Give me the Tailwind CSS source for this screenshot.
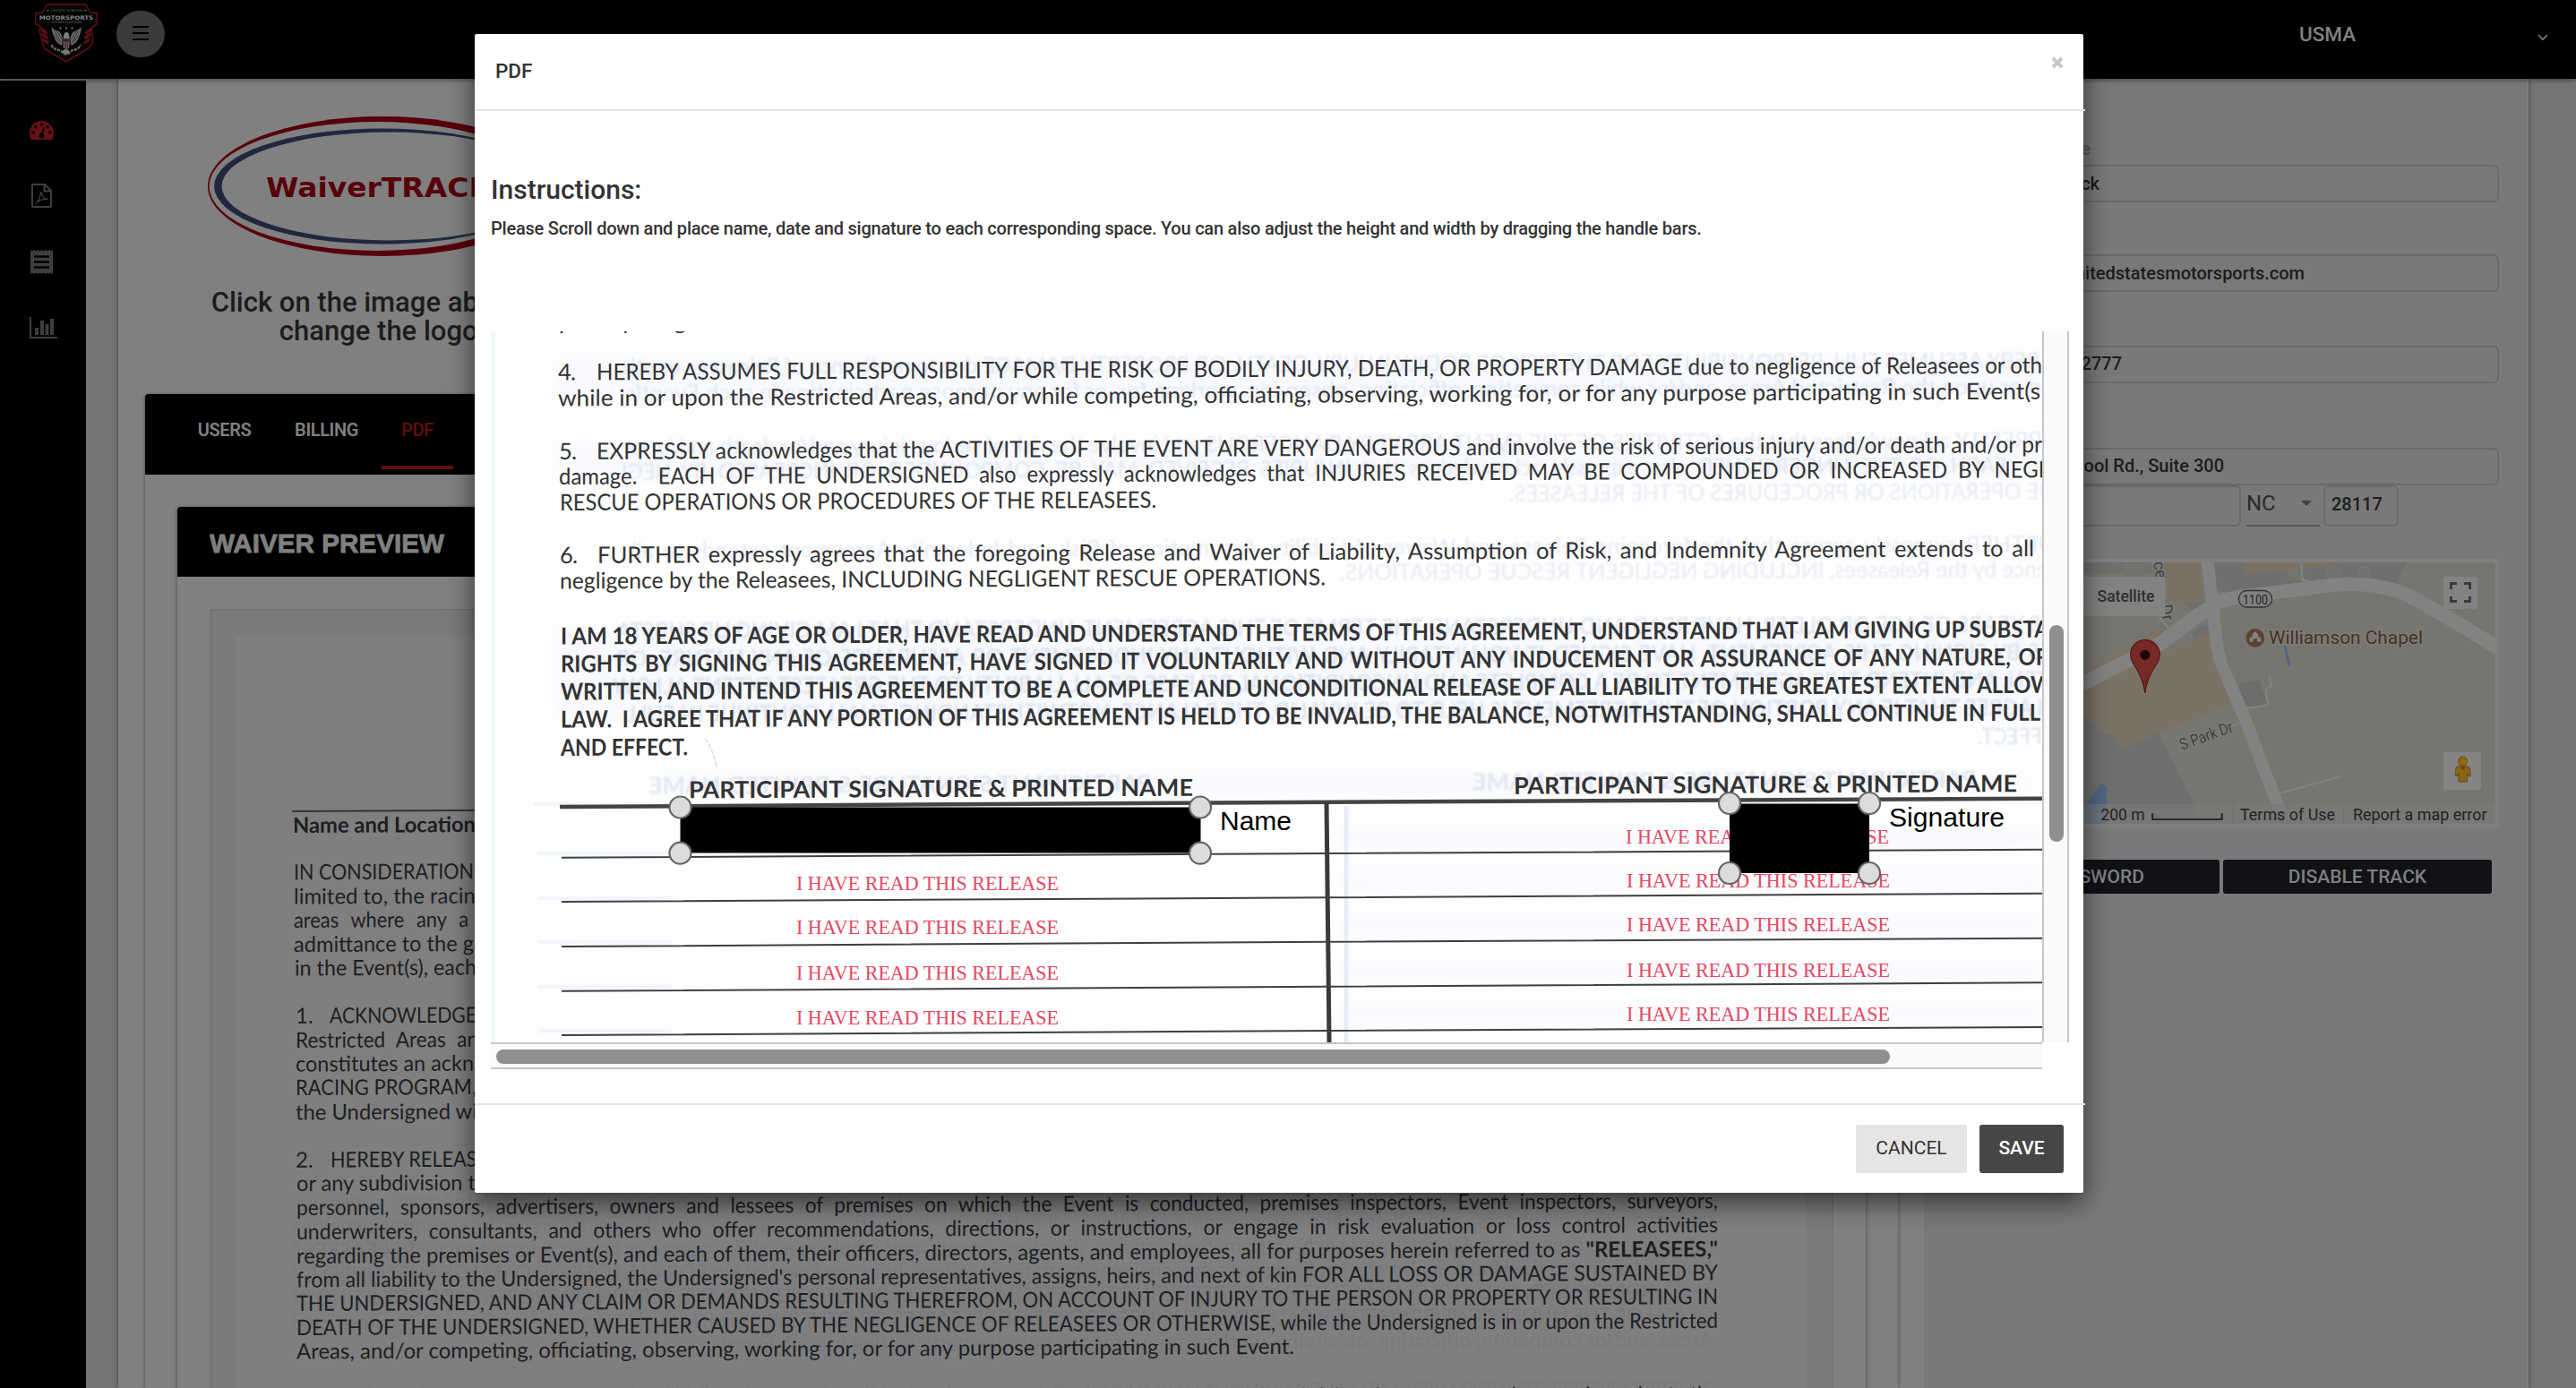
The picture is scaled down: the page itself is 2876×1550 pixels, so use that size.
<!DOCTYPE html>
<html lang="en">
<head>
<meta charset="utf-8">
<title>USMA - PDF</title>
<script src="https://cdn.jsdelivr.net/npm/@tailwindcss/browser@4"></script>
</head>
<body class="bg-[#747474]">
<div class="relative w-[2876px] h-[1550px] overflow-hidden bg-[#747474] font-['Roboto',sans-serif] text-[#1c1c1c]">

  <!-- top bar -->
  <header class="relative z-10 flex h-[88px] items-start bg-black shadow-[0_1px_6px_rgba(0,0,0,0.5)]">
    <svg class="ml-[38px] mt-[3px] h-[68px] w-[72px]" viewBox="110 7 210 152" preserveAspectRatio="none">
      <path d="M152 11H278L293 32L315 33V60L303 66L298 76L302 108L287 121L214 154L143 121L128 80L130 66L115 60V33L137 32Z" fill="#050505" stroke="#5e0f14" stroke-width="4"/>
      <path d="M129 66l24 13v9l-20-10zM133 80l22 11v9l-19-10zM137 94l21 10v8l-18-9zM301 66l-24 13v9l20-10zM297 80l-22 11v9l19-10zM293 94l-21 10v8l18-9z" fill="#5e0f14"/>
      <text x="148" y="29" font-family="Liberation Sans" font-size="8" fill="#555" textLength="134" lengthAdjust="spacingAndGlyphs">★ UNITED STATES ★</text>
      <text x="127" y="49" font-family="DejaVu Sans" font-weight="bold" font-size="14" fill="#858585" textLength="176" lengthAdjust="spacingAndGlyphs">MOTORSPORTS</text>
      <text x="167" y="59" font-family="DejaVu Sans" font-size="8" fill="#666" textLength="98" lengthAdjust="spacingAndGlyphs">ASSOCIATION</text>
      <path d="M167 68Q174 76 190 78Q200 84 203 98L200 114Q182 108 174 90Q168 80 167 68zM264 68Q256 76 242 78Q230 84 228 98L231 114Q250 108 258 90Q263 80 264 68z" fill="#6b6b6b"/>
      <path d="M176 78l20 26M182 76l18 22M174 88l22 20M255 78l-20 26M249 76l-18 22M257 88l-22 20" stroke="#0a0a0a" stroke-width="1.5"/>
      <path d="M207 88q2-8 10-7q8 1 8 12l3 6h-24z" fill="#7d7d7d"/>
      <path d="M202 97h26v14q-2 10-13 14q-11-4-13-14z" fill="#50282c"/><path d="M202 97h26v6h-26z" fill="#1e2a45"/>
      <path d="M208 104v17M215 104v20M222 104v17" stroke="#777" stroke-width="2"/>
      <path d="M166 112q8 12 24 13q10 0 12 6q12 8 26 0q4-6 12-6q16-2 22-13" fill="none" stroke="#686868" stroke-width="6" stroke-dasharray="9 3"/>
      <path d="M200 131q15 10 28 0l-8-7h-12z" fill="#777"/>
      <text x="191" y="75" font-family="DejaVu Sans" font-size="11" fill="#777" textLength="48">★★★</text>
    </svg>
    <button class="ml-[20px] mt-[12px] flex h-[52px] w-[54px] flex-col items-center justify-center gap-[5px] rounded-full bg-[#3b3b3b] pb-[2px]">
      <span class="h-[2px] w-[18px] bg-black"></span><span class="h-[2px] w-[18px] bg-black"></span><span class="h-[2px] w-[18px] bg-black"></span>
    </button>
    <div class="ml-auto mr-[31px] flex h-[77px] w-[278px] items-center justify-between">
      <span class="text-[22.5px] font-medium text-[#808080]">USMA</span>
      <svg class="mt-[7px] h-[8px] w-[12px]" viewBox="0 0 12 8"><path d="M1 1l5 5 5-5" fill="none" stroke="#808080" stroke-width="1.6"/></svg>
    </div>
  </header>

  <div class="flex h-[1462px]">
    <!-- side navigation -->
    <nav class="mt-[2px] flex w-[96px] shrink-0 flex-col bg-black">
      <svg class="ml-[33px] mt-[45px] h-[21px] w-[27px]" viewBox="0 0 27 21"><path d="M2 21Q0 18 0 13.500A13.500 13.500 0 0 1 27 13.500Q27 18 25 21Z" fill="#6a1015"/><g fill="#000"><circle cx="4" cy="13" r="1.900"/><circle cx="6.800" cy="6.800" r="1.900"/><circle cx="13.500" cy="4" r="1.900"/><circle cx="20.200" cy="6.800" r="1.900"/><circle cx="23" cy="13" r="1.900"/><circle cx="13.500" cy="16.500" r="2.900"/></g><path d="M13.500 16L16 7.500" stroke="#000" stroke-width="1.800"/></svg>
      <svg class="ml-[35px] mt-[49px] h-[27px] w-[23px]" viewBox="0 0 23 27" fill="none" stroke="#404040" stroke-width="2"><path d="M1 2Q1 1 2 1H15L22 8V25Q22 26 21 26H2Q1 26 1 25ZM14.500 1V8.500H22"/><path d="M4.500 22.500Q9 20 10.800 9Q12 17 18.500 17.500Q11 16.500 5 22" stroke-width="1.400"/></svg>
      <svg class="ml-[34px] mt-[47px] h-[27px] w-[25px]" viewBox="0 0 25 27"><path d="M0 0l2 1.500L4.200 0l2 1.500L8.400 0l2 1.500L12.500 0l2 1.500L16.700 0l2 1.500L20.900 0l2 1.500L25 0V27l-2.100-1.500L20.900 27l-2.200-1.500L16.700 27l-2.200-1.500L12.500 27l-2.100-1.500L8.400 27l-2.200-1.500L4.200 27l-2.200-1.500L0 27Z" fill="#3e3e3e"/><path d="M4 7.500H21M4 13.500H21M4 19.500H21" stroke="#000" stroke-width="2.300"/></svg>
      <svg class="ml-[33px] mt-[48px] h-[24px] w-[31px]" viewBox="0 0 31 24" fill="#3e3e3e"><path d="M0 0H2V22H31V24H0ZM6 12h4v8H6zM12 4h4v16h-4zM17.500 8h4v12h-4zM23 2h4v18h-4z"/></svg>
    </nav>

    <main class="ml-[36px] flex w-[2691px] shrink-0 bg-[#808080] shadow-[0_0_5px_rgba(0,0,0,0.45)]">
      <!-- left column: logo, tabs, waiver preview -->
      <section class="w-[2016px] shrink-0 pl-[30px]">
        <div class="flex h-[352px] w-[530px] flex-col items-center pt-[42px]">
          <svg class="h-[156px] w-[390px]" viewBox="232 130 390 156">
            <ellipse cx="427" cy="208" rx="195" ry="78" fill="#57000b"/><ellipse cx="421" cy="208" rx="187.500" ry="72" fill="#808080"/>
            <ellipse cx="427" cy="208" rx="188" ry="64.600" fill="#20273f"/><ellipse cx="434" cy="208" rx="186.500" ry="60.500" fill="#808080"/>
            <text x="297" y="220" font-family="DejaVu Sans" font-weight="bold" font-size="31" fill="#57000b" textLength="252" lengthAdjust="spacingAndGlyphs">WaiverTRACK</text>
          </svg>
          <p class="mt-[36px] whitespace-nowrap text-center text-[31px] font-medium leading-[32px] text-[#1c1c1c]">Click on the image above to<br>change the logo.</p>
        </div>
        <div class="h-[1110px] w-[1957px] rounded-t-[4px] bg-[#808080] shadow-[0_1px_4px_rgba(0,0,0,0.45)]">
          <div class="flex h-[90px] items-start rounded-t-[4px] bg-black pl-[36px] text-[20px] font-semibold tracking-[-0.4px] text-[#808080]">
            <span class="flex h-[84px] w-[105px] items-center justify-center pb-[5px]">USERS</span>
            <span class="flex h-[84px] w-[123px] items-center justify-center pb-[5px]">BILLING</span>
            <span class="flex h-[84px] w-[80px] items-center justify-center border-b-4 border-[#620d12] pb-px font-medium text-[#620d12]">PDF</span>
          </div>
          <div class="px-[36px] pt-[36px]">
            <div class="h-[990px] rounded-t-[4px] bg-[#808080] shadow-[0_1px_4px_rgba(0,0,0,0.45)]">
              <div class="flex h-[78px] items-center rounded-t-[4px] bg-black pl-[36px]">
                <svg class="h-[40px] w-[270px]" viewBox="0 0 270 40"><text x="0" y="31.500" font-family="Liberation Sans" font-weight="bold" font-size="30" fill="#808080" stroke="#808080" stroke-width="0.800" textLength="262" lengthAdjust="spacingAndGlyphs">WAIVER PREVIEW</text></svg>
              </div>
              <div class="px-[36px] pt-[36px]">
                <div class="h-[900px] rounded-[4px] border-2 border-[#737373] bg-[#7a7a7a] pl-[28px] pt-[28px]">
                  <svg class="h-[842px] w-[1752px] bg-[#7f7f80]" viewBox="264 710 1752 842" font-family="Lato" font-size="24" fill="#1e1e1e">
                    <g transform="matrix(1,-0.005,0,1,0,1.65)">
                      <use href="#preview-copy" transform="translate(2244,-6) scale(-1,1)" fill="#303c58" opacity="0.070"/>
                      <path d="M326 906H1918" stroke="#333" stroke-width="2"/>
                      <g id="preview-copy">
                        <text x="327" y="930" font-weight="bold" textLength="204" lengthAdjust="spacingAndGlyphs">Name and Location</text>
                        <text x="328" y="982.400" textLength="201" lengthAdjust="spacingAndGlyphs">IN CONSIDERATION</text>
                        <text x="328" y="1009.600" textLength="203" lengthAdjust="spacingAndGlyphs">limited to, the racin</text>
                        <text x="328" y="1036" textLength="195" lengthAdjust="spacingAndGlyphs" word-spacing="9">areas where any a</text>
                        <text x="328" y="1063" textLength="201" lengthAdjust="spacingAndGlyphs">admittance to the g</text>
                        <text x="329" y="1089.500" textLength="203" lengthAdjust="spacingAndGlyphs">in the Event(s), each</text>
                        <text x="330" y="1142.800">1.</text>
                        <text x="368" y="1142.800" textLength="164" lengthAdjust="spacingAndGlyphs">ACKNOWLEDGE</text>
                        <text x="330" y="1170" textLength="204" lengthAdjust="spacingAndGlyphs" word-spacing="7">Restricted Areas an</text>
                        <text x="330" y="1196.600" textLength="199" lengthAdjust="spacingAndGlyphs">constitutes an ackn</text>
                        <text x="330" y="1223" textLength="202" lengthAdjust="spacingAndGlyphs">RACING PROGRAM,</text>
                        <text x="330" y="1250.500" textLength="203" lengthAdjust="spacingAndGlyphs">the Undersigned wi</text>
                        <text x="330" y="1303.700">2.</text>
                        <text x="369" y="1303.700" textLength="188" lengthAdjust="spacingAndGlyphs">HEREBY RELEASES</text>
                        <text x="331" y="1330" textLength="200" lengthAdjust="spacingAndGlyphs">or any subdivision t</text>
                        <text x="331" y="1357" textLength="1587" lengthAdjust="spacingAndGlyphs" word-spacing="7">personnel, sponsors, advertisers, owners and lessees of premises on which the Event is conducted, premises inspectors, Event inspectors, surveyors,</text>
                        <text x="331" y="1384" textLength="1587" lengthAdjust="spacingAndGlyphs" word-spacing="7">underwriters, consultants, and others who offer recommendations, directions, or instructions, or engage in risk evaluation or loss control activities</text>
                        <text x="331" y="1411" textLength="1587" lengthAdjust="spacingAndGlyphs">regarding the premises or Event(s), and each of them, their officers, directors, agents, and employees, all for purposes herein referred to as <tspan font-weight="bold">"RELEASEES,"</tspan></text>
                        <text x="331" y="1437.500" textLength="1587" lengthAdjust="spacingAndGlyphs">from all liability to the Undersigned, the Undersigned's personal representatives, assigns, heirs, and next of kin FOR ALL LOSS OR DAMAGE SUSTAINED BY</text>
                        <text x="331" y="1464" textLength="1587" lengthAdjust="spacingAndGlyphs">THE UNDERSIGNED, AND ANY CLAIM OR DEMANDS RESULTING THEREFROM, ON ACCOUNT OF INJURY TO THE PERSON OR PROPERTY OR RESULTING IN</text>
                        <text x="331" y="1491" textLength="1587" lengthAdjust="spacingAndGlyphs">DEATH OF THE UNDERSIGNED, WHETHER CAUSED BY THE NEGLIGENCE OF RELEASEES OR OTHERWISE, while the Undersigned is in or upon the Restricted</text>
                        <text x="331" y="1517.500" textLength="1114" lengthAdjust="spacingAndGlyphs">Areas, and/or competing, officiating, observing, working for, or for any purpose participating in such Event.</text>
                        <text x="331" y="1573" textLength="1587" lengthAdjust="spacingAndGlyphs">3. HEREBY AGREES TO INDEMNIFY AND SAVE AND HOLD HARMLESS the Releasees and each of them from any loss, liability, damage, or cost they may incur due to the</text>
                      </g>
                    </g>
                  </svg>
                </div>
              </div>
            </div>
          </div>
        </div>
      </section>

      <!-- right column: track details -->
      <section class="w-[673px] shrink-0 bg-[#797979] pl-[30px] text-[20px] font-medium leading-[24px]">
        <div class="flex h-[96px] w-[156px] items-end justify-end pb-[6px] text-[#555]">Track Name</div>
        <div class="flex h-[42px] w-[612px] items-center rounded-[6px] border-2 border-[#6a6a6a]"><span class="flex w-[164px] justify-end">Track</span></div>
        <div class="mt-[58px] flex h-[42px] w-[612px] items-center rounded-[6px] border-2 border-[#6a6a6a]"><span class="flex w-[393px] justify-end">info@unitedstatesmotorsports.com</span></div>
        <div class="mt-[60px] flex h-[42px] w-[612px] items-center rounded-[6px] border-2 border-[#6a6a6a]"><span class="flex w-[189px] justify-end pb-[3px]">704-555-2777</span></div>
        <div class="mt-[72px] flex h-[42px] w-[612px] items-center rounded-[6px] border-2 border-[#6a6a6a]"><span class="flex w-[303px] justify-end whitespace-nowrap pb-[3px]">School Rd., Suite 300</span></div>
        <div class="flex h-[46px]">
          <div class="w-[324px] rounded-[6px] border-2 border-[#6a6a6a]"></div>
          <div class="ml-[6px] flex w-[82px] items-center justify-between border-b-2 border-[#565656] pb-[5px] pr-[9px] text-[24px] font-normal text-[#2a2a2a]">NC<svg class="h-[6px] w-[12px]" viewBox="0 0 12 6"><path d="M0 0H12L6 6Z" fill="#404040"/></svg></div>
          <div class="ml-[4px] flex w-[84px] items-center rounded-[6px] border-2 border-[#6a6a6a] pb-[4px] pl-[7px]">28117</div>
        </div>
        <div class="mt-[36px] h-[300px] w-[612px] border-4 border-[#808080] bg-[#76756f]">
          <svg class="ml-auto block h-[292px] w-[460px]" viewBox="2326 628 460 292" font-family="Roboto" font-weight="400">
            <g transform="translate(2300 590) scale(0.36735 0.33333)">
              <path d="M60 100H1330V1000H60Z" fill="#76756f"/>
              <path d="M60 100H280V150H60ZM470 110H1055L1020 190L840 170L500 215L475 200Z" fill="#6f6f6f"/>
              <path d="M190 120h60v40h-60zM690 125h50v50h-50zM810 125h45v45h-45zM905 125h40v50h-40zM1285 110L1330 160V110Z" fill="#74746f"/>
              <path d="M280 100H430L440 250L330 260ZM545 112H830L840 125L700 142L570 152Z" fill="#7b7266"/>
              <path d="M385 250L440 245V270L410 285ZM400 350L425 330L450 325L455 345L425 360L432 415H422Z" fill="#6f6f6f"/>
              <path d="M60 480L360 300L370 320L320 420L450 350L520 590L300 685L185 740L160 690L130 690L60 610Z" fill="#7b7266"/>
              <path d="M60 610L130 690L160 690L185 740L300 685L410 930V1000H60Z" fill="#6f6f6f"/>
              <path d="M78 925L125 855L140 865V990H78Z" fill="#4f6583"/>
              <path d="M540 523L605 508L630 590L565 600Z" fill="#6c6c6c"/>
              <g fill="none" stroke="#828282" stroke-linejoin="round">
                <path d="M60 525L300 390L420 290L480 248Q520 230 600 222L830 190Q940 178 1040 215Q1180 295 1335 405" stroke-width="46"/>
                <path d="M447 100L470 330Q480 440 500 480L555 620L670 950" stroke-width="38"/>
                <path d="M732 100L737 175L755 175M565 603L632 592L625 538L642 530L637 492M555 650L520 662M665 888L858 830M300 300L340 345" stroke-width="6"/>
              </g>
              <path d="M683 392L697 460" stroke="#4f6583" stroke-width="7"/>
              <path d="M60 924H1324V990H60Z" fill="#7a7a7a" fill-opacity="0.650"/>
              <path d="M281 955V975H492V955" fill="none" stroke="#2a2a2a" stroke-width="6"/>
              <path d="M526 924V990M862 924V990" stroke="#707070" stroke-width="3"/>
              <path d="M258 552Q252 500 222 452Q214 440 214 424A44 50 0 0 1 303 424Q303 440 295 452Q264 500 258 552Z" fill="#762926" stroke="#521313" stroke-width="3"/>
              <ellipse cx="258" cy="424" rx="15" ry="17" fill="#240606"/>
              <ellipse cx="593" cy="367" rx="28" ry="31" fill="#5a4334"/>
              <path d="M576 380V365h8v-10l9-10l9 10v10h8v15h-11v-10h-12v10z" fill="#828282"/>
            </g>
            <g fill="#3f3f3f" font-size="18" stroke="#7c7c7c" stroke-width="3" paint-order="stroke">
              <text transform="translate(2404 628) rotate(80)">ce</text>
              <text transform="translate(2412 676) rotate(80)">Dr</text>
              <text transform="translate(2436 838) rotate(-20)" textLength="62" lengthAdjust="spacingAndGlyphs">S Park Dr</text>
            </g>
            <rect x="2310" y="644" width="107.500" height="44" rx="2" fill="#828282"/>
            <text x="2341.500" y="671.700" font-size="18" fill="#2f2f2f" font-weight="500" textLength="64" lengthAdjust="spacingAndGlyphs">Satellite</text>
            <rect x="2499.500" y="659.500" width="37" height="18.500" rx="9" fill="#808080" stroke="#333" stroke-width="1.300"/>
            <text x="2504" y="674.500" font-size="15" fill="#222" textLength="28" lengthAdjust="spacingAndGlyphs">1100</text>
            <text x="2533" y="719.300" font-size="21" fill="#463022" stroke="#7c7c78" stroke-width="3" paint-order="stroke" textLength="172" lengthAdjust="spacingAndGlyphs">Williamson Chapel</text>
            <g font-size="18" fill="#222">
              <text x="2345.500" y="915.700" textLength="49" lengthAdjust="spacingAndGlyphs">200 m</text>
              <text x="2501" y="915.700" textLength="106" lengthAdjust="spacingAndGlyphs">Terms of Use</text>
              <text x="2627" y="915.700" textLength="149.500" lengthAdjust="spacingAndGlyphs">Report a map error</text>
            </g>
            <rect x="2728" y="644" width="38" height="36" rx="2" fill="#828282"/>
            <path d="M2736.500 658V651.500H2743M2751 651.500H2757.500V658M2757.500 666V671.500H2751M2743 671.500H2736.500V666" fill="none" stroke="#3a3a3a" stroke-width="3"/>
            <rect x="2728" y="840" width="42" height="42" rx="2" fill="#848484"/>
            <path d="M2742 857q7-5 15 0l1.500 9l-2.500 1l-1.500-4v10h-9.500v-10l-1.500 4l-2.500-1z" fill="#8a6414" stroke="#5a4410" stroke-width="0.800"/>
            <circle cx="2749.600" cy="850" r="5" fill="#91690f" stroke="#5a4410" stroke-width="0.800"/>
            <path d="M2747 856h5.500l-2.700 4z" fill="#7a3a0c"/>
          </svg>
        </div>
        <div class="mt-[36px] flex h-[38px] gap-[4px] text-[21px] text-[#808080]">
          <div class="flex w-[300px] items-center justify-end rounded-[3px] bg-[#111216] pr-[84px]">SET PASSWORD</div>
          <div class="flex w-[300px] items-center justify-center rounded-[3px] bg-[#111216]">DISABLE TRACK</div>
        </div>
      </section>
    </main>
  </div>

  <!-- modal dialog -->
  <div class="absolute left-[530px] top-[38px] z-20 flex h-[1294px] w-[1796px] flex-col rounded-[2px] bg-white text-[#333] shadow-[0_10px_30px_rgba(0,0,0,0.6)]">
    <div class="flex h-[86px] w-[1798px] items-start justify-between border-b-2 border-[#e5e5e5] pl-[23px] pr-[24px]">
      <h4 class="mt-[27px] text-[22.5px] font-medium leading-[28px]">PDF</h4>
      <svg class="mt-[25px] h-[14px] w-[14px]" viewBox="0 0 14 14"><path d="M2 2L12 12M12 2L2 12" stroke="#c8c8c8" stroke-width="4.200"/></svg>
    </div>
    <div class="h-[1108px] pl-[18px]">
      <h3 class="pt-[70px] text-[30px] font-medium leading-[36px]">Instructions:</h3>
      <p class="mt-[12px] whitespace-nowrap text-[20px] font-medium leading-[26px] tracking-[-0.22px]">Please Scroll down and place name, date and signature to each corresponding space. You can also adjust the height and width by dragging the handle bars.</p>
      <div class="mt-[102px] flex">
        <svg class="block h-[794px] w-[1732px] bg-[#fefefe]" viewBox="548 370 1732 794" font-family="Lato" font-size="25.500" fill="#333">
          <defs><filter id="soft"><feGaussianBlur stdDeviation="0.900"/></filter><filter id="wash"><feGaussianBlur stdDeviation="8"/></filter></defs>
          <path d="M548 370h5v794h-5z" fill="#eff7fb"/>
          <g fill="#f3f5fc" opacity="0.550" filter="url(#wash)"><path d="M620 400H2280V440H620zM620 495H2280V530H620zM620 700H2280V805H620zM740 865H2260V885H740zM1500 925H2280V945H1500zM1500 975H2280V992H1500zM1500 1025H2280V1042H1500zM1500 1075H2280V1092H1500zM1500 1125H2280V1142H1500z"/></g>
          <g transform="matrix(1,-0.0047,0,1,0,2.940)">
            <use href="#waiver-copy" transform="translate(2976,-5) scale(-1,1)" fill="#5a74b4" opacity="0.150" filter="url(#soft)"/>
            <g id="waiver-copy">
              <text x="624" y="368" textLength="142" lengthAdjust="spacingAndGlyphs">participating</text>
              <text x="623" y="424.500" textLength="20">4.</text>
              <text x="666" y="424.500" textLength="1614" lengthAdjust="spacingAndGlyphs">HEREBY ASSUMES FULL RESPONSIBILITY FOR THE RISK OF BODILY INJURY, DEATH, OR PROPERTY DAMAGE due to negligence of Releasees or oth</text>
              <text x="623" y="453.500" textLength="1655" lengthAdjust="spacingAndGlyphs">while in or upon the Restricted Areas, and/or while competing, officiating, observing, working for, or for any purpose participating in such Event(s</text>
              <text x="624" y="513" textLength="20">5.</text>
              <text x="666" y="513" textLength="1614" lengthAdjust="spacingAndGlyphs">EXPRESSLY acknowledges that the ACTIVITIES OF THE EVENT ARE VERY DANGEROUS and involve the risk of serious injury and/or death and/or pr</text>
              <text x="624" y="541" textLength="1664" lengthAdjust="spacingAndGlyphs" word-spacing="6">damage. &#160;EACH OF THE UNDERSIGNED also expressly acknowledges that INJURIES RECEIVED MAY BE COMPOUNDED OR INCREASED BY NEGL</text>
              <text x="625" y="570" textLength="666" lengthAdjust="spacingAndGlyphs">RESCUE OPERATIONS OR PROCEDURES OF THE RELEASEES.</text>
              <text x="625" y="629" textLength="20">6.</text>
              <text x="667" y="629" textLength="1604" lengthAdjust="spacingAndGlyphs" word-spacing="3">FURTHER expressly agrees that the foregoing Release and Waiver of Liability, Assumption of Risk, and Indemnity Agreement extends to all</text>
              <text x="625" y="657.500" textLength="855" lengthAdjust="spacingAndGlyphs">negligence by the Releasees, INCLUDING NEGLIGENT RESCUE OPERATIONS.</text>
              <g font-weight="bold" font-size="26">
                <text x="626" y="719.500" textLength="1662" lengthAdjust="spacingAndGlyphs">I AM 18 YEARS OF AGE OR OLDER, HAVE READ AND UNDERSTAND THE TERMS OF THIS AGREEMENT, UNDERSTAND THAT I AM GIVING UP SUBSTA</text>
                <text x="626" y="750.500" textLength="1662" lengthAdjust="spacingAndGlyphs" word-spacing="3">RIGHTS BY SIGNING THIS AGREEMENT, HAVE SIGNED IT VOLUNTARILY AND WITHOUT ANY INDUCEMENT OR ASSURANCE OF ANY NATURE, OR</text>
                <text x="626" y="781.500" textLength="1666" lengthAdjust="spacingAndGlyphs">WRITTEN, AND INTEND THIS AGREEMENT TO BE A COMPLETE AND UNCONDITIONAL RELEASE OF ALL LIABILITY TO THE GREATEST EXTENT ALLOW</text>
                <text x="626" y="812.500" textLength="1652" lengthAdjust="spacingAndGlyphs">LAW. &#160;I AGREE THAT IF ANY PORTION OF THIS AGREEMENT IS HELD TO BE INVALID, THE BALANCE, NOTWITHSTANDING, SHALL CONTINUE IN FULL</text>
                <text x="626" y="844" textLength="142" lengthAdjust="spacingAndGlyphs">AND EFFECT.</text>
                <text x="769" y="892" textLength="563" lengthAdjust="spacingAndGlyphs">PARTICIPANT SIGNATURE &amp; PRINTED NAME</text>
                <text x="1690" y="891.700" textLength="562" lengthAdjust="spacingAndGlyphs">PARTICIPANT SIGNATURE &amp; PRINTED NAME</text>
              </g>
            </g>
          </g>
          <!-- sign-in table rules -->
          <path d="M1503 900V1164" stroke="#e6edf9" stroke-width="5"/>
          <path d="M596 898H750M600 953H750M600 1003H750M600 1052H750M600 1102H750M600 1151H750" stroke="#f0f4fa" stroke-width="4" filter="url(#soft)"/>
          <path d="M625 901L1440 896L2280 891.700" fill="none" stroke="#444" stroke-width="4.500"/>
          <path d="M1481 897L1484 1164" stroke="#3a3a3a" stroke-width="5"/>
          <path d="M627 957.700L1440 953.300L2280 948.700M627 1007L1440 1002.500L2280 997.700M627 1057L1440 1052L2280 1047.700M627 1106.700L1440 1102L2280 1097.300M627 1156L1440 1151.300L2280 1147" fill="none" stroke="#3f3f3f" stroke-width="2"/>
          <path d="M787 825Q797 838 800 858" fill="none" stroke="#f6c6d0" stroke-width="1.200" stroke-dasharray="5 2"/>
          <g font-family="Liberation Serif" font-size="22.500" fill="#e54862">
            <text x="889" y="994" textLength="293" lengthAdjust="spacingAndGlyphs">I HAVE READ THIS RELEASE</text>
            <text x="889" y="1043.300" textLength="293" lengthAdjust="spacingAndGlyphs">I HAVE READ THIS RELEASE</text>
            <text x="889" y="1094" textLength="293" lengthAdjust="spacingAndGlyphs">I HAVE READ THIS RELEASE</text>
            <text x="889" y="1143.500" textLength="293" lengthAdjust="spacingAndGlyphs">I HAVE READ THIS RELEASE</text>
            <text x="1815" y="941.500" textLength="294" lengthAdjust="spacingAndGlyphs">I HAVE READ THIS RELEASE</text>
            <text x="1816" y="990.700" textLength="294" lengthAdjust="spacingAndGlyphs">I HAVE READ THIS RELEASE</text>
            <text x="1816" y="1040" textLength="294" lengthAdjust="spacingAndGlyphs">I HAVE READ THIS RELEASE</text>
            <text x="1816" y="1091" textLength="294" lengthAdjust="spacingAndGlyphs">I HAVE READ THIS RELEASE</text>
            <text x="1816" y="1140" textLength="294" lengthAdjust="spacingAndGlyphs">I HAVE READ THIS RELEASE</text>
          </g>
          <!-- draggable fields -->
          <rect x="759.500" y="901.500" width="581" height="51" fill="#000"/>
          <rect x="1931" y="897.500" width="156" height="77.500" fill="#000"/>
          <g fill="#dcdcdc" stroke="#666" stroke-width="2.200">
            <circle cx="759.500" cy="901.500" r="12"/><circle cx="1340" cy="901.500" r="12"/><circle cx="759.500" cy="952.700" r="12"/><circle cx="1340" cy="952.700" r="12"/>
            <circle cx="1931" cy="897" r="12"/><circle cx="2087" cy="897" r="12"/><circle cx="1931" cy="975" r="12"/><circle cx="2087" cy="975" r="12"/>
          </g>
          <g font-family="Liberation Sans" font-size="30" fill="#000">
            <text x="1362" y="927" textLength="80" lengthAdjust="spacingAndGlyphs">Name</text>
            <text x="2109" y="922.500" textLength="129" lengthAdjust="spacingAndGlyphs">Signature</text>
          </g>
        </svg>
        <div class="h-[794px] w-[30px] border-x-2 border-[#c6c6c6] bg-[#fafafa] pl-[6px] pt-[328px]"><div class="h-[242px] w-[16px] rounded-full bg-[#8f8f8f]"></div></div>
      </div>
      <div class="h-[30px] w-[1732px] border-y-2 border-[#c6c6c6] bg-[#fafafa] pl-[6px] pt-[6px]"><div class="h-[16px] w-[1556px] rounded-full bg-[#8f8f8f]"></div></div>
    </div>
    <div class="flex h-[100px] w-[1798px] items-start justify-end gap-[14px] border-t-2 border-[#e5e5e5] pr-[24px] pt-[22px] text-[21px]">
      <button class="h-[54px] w-[124px] rounded-[3px] bg-[#e5e5e5] text-[#333]">CANCEL</button>
      <button class="h-[54px] w-[94px] rounded-[3px] bg-[#464646] font-medium text-white">SAVE</button>
    </div>
  </div>
</div>
</body>
</html>
